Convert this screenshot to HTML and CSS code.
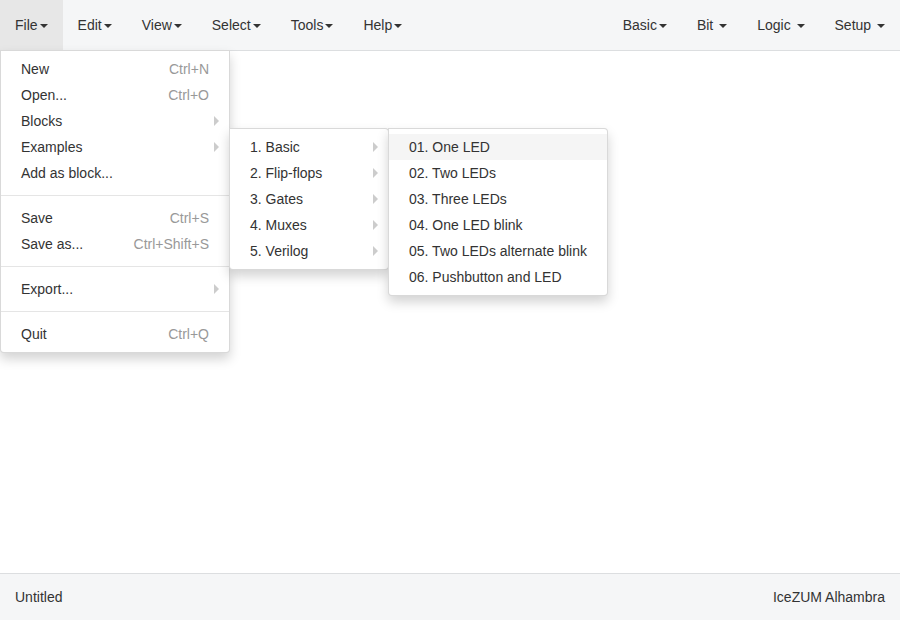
FILE: index.html
```html
<!DOCTYPE html>
<html>
<head>
<meta charset="utf-8">
<link rel="stylesheet" href="styles.css">
</head>
<body>
<div class="app">
  <header class="navbar">
    <ul class="nav">
      <li class="nav-item active">
        <a class="nav-link">File<span class="caret"></span></a>
        <ul class="menu file-menu">
          <li class="item"><span>New</span><span class="shortcut">Ctrl+N</span></li>
          <li class="item"><span>Open...</span><span class="shortcut">Ctrl+O</span></li>
          <li class="item sub"><span>Blocks</span></li>
          <li class="item sub">
            <span>Examples</span>
            <ul class="menu submenu">
              <li class="item sub">
                <span>1. Basic</span>
                <ul class="menu submenu">
                  <li class="item hover"><span>01. One LED</span></li>
                  <li class="item"><span>02. Two LEDs</span></li>
                  <li class="item"><span>03. Three LEDs</span></li>
                  <li class="item"><span>04. One LED blink</span></li>
                  <li class="item"><span>05. Two LEDs alternate blink</span></li>
                  <li class="item"><span>06. Pushbutton and LED</span></li>
                </ul>
              </li>
              <li class="item sub"><span>2. Flip-flops</span></li>
              <li class="item sub"><span>3. Gates</span></li>
              <li class="item sub"><span>4. Muxes</span></li>
              <li class="item sub"><span>5. Verilog</span></li>
            </ul>
          </li>
          <li class="item"><span>Add as block...</span></li>
          <li class="divider"></li>
          <li class="item"><span>Save</span><span class="shortcut">Ctrl+S</span></li>
          <li class="item"><span>Save as...</span><span class="shortcut">Ctrl+Shift+S</span></li>
          <li class="divider"></li>
          <li class="item sub"><span>Export...</span></li>
          <li class="divider"></li>
          <li class="item"><span>Quit</span><span class="shortcut">Ctrl+Q</span></li>
        </ul>
      </li>
      <li class="nav-item"><a class="nav-link">Edit<span class="caret"></span></a></li>
      <li class="nav-item"><a class="nav-link">View<span class="caret"></span></a></li>
      <li class="nav-item"><a class="nav-link">Select<span class="caret"></span></a></li>
      <li class="nav-item"><a class="nav-link">Tools<span class="caret"></span></a></li>
      <li class="nav-item"><a class="nav-link">Help<span class="caret"></span></a></li>
    </ul>
    <ul class="nav nav-right">
      <li class="nav-item"><a class="nav-link">Basic<span class="caret"></span></a></li>
      <li class="nav-item"><a class="nav-link">Bit <span class="caret"></span></a></li>
      <li class="nav-item"><a class="nav-link">Logic <span class="caret"></span></a></li>
      <li class="nav-item"><a class="nav-link">Setup <span class="caret"></span></a></li>
    </ul>
  </header>
  <main class="canvas"></main>
  <footer class="footer">
    <span>Untitled</span>
    <span>IceZUM Alhambra</span>
  </footer>
</div>
</body>
</html>
```

FILE: styles.css
```css
* {
  box-sizing: border-box;
}
html, body {
  margin: 0;
  padding: 0;
}
body {
  font-family: "Liberation Sans", Arial, Helvetica, sans-serif;
  font-size: 14px;
  line-height: 20px;
  color: #333;
  background: #fff;
}
ul {
  list-style: none;
  margin: 0;
  padding: 0;
}
.app {
  display: flex;
  flex-direction: column;
  height: 620px;
}
.navbar {
  display: flex;
  justify-content: space-between;
  height: 51px;
  background: #f5f6f7;
  border-bottom: 1px solid #dcdee0;
  position: relative;
  z-index: 10;
}
.nav {
  display: flex;
}
.nav-item {
  position: relative;
}
.nav-link {
  display: block;
  padding: 15px 15px;
  line-height: 20px;
  color: #333;
  white-space: pre;
}
.nav-item.active > .nav-link {
  background: #e7e7e7;
}
.caret {
  display: inline-block;
  width: 0;
  height: 0;
  margin-left: 2px;
  vertical-align: middle;
  border-top: 4px solid #333;
  border-right: 4px solid transparent;
  border-left: 4px solid transparent;
}
.menu {
  position: absolute;
  background: #fff;
  border: 1px solid rgba(0, 0, 0, 0.15);
  box-shadow: 0 6px 12px rgba(0, 0, 0, 0.175);
  padding: 5px 0;
  min-width: 160px;
  white-space: nowrap;
}
.file-menu {
  top: 100%;
  left: 0;
  width: 230px;
  border-radius: 0 0 4px 4px;
}
.submenu {
  top: -6px;
  left: 100%;
  border-radius: 0 4px 4px 4px;
}
.item {
  position: relative;
  display: flex;
  justify-content: space-between;
  padding: 3px 20px;
  line-height: 20px;
  color: #333;
}
.item.hover {
  background: #f5f5f5;
}
.shortcut {
  color: #999;
  margin-left: 20px;
}
.item.sub::after {
  content: "";
  position: absolute;
  right: 10px;
  top: 8px;
  width: 0;
  height: 0;
  border-left: 5px solid #ccc;
  border-top: 5px solid transparent;
  border-bottom: 5px solid transparent;
}
.divider {
  height: 1px;
  margin: 9px 0;
  background: #e5e5e5;
}
.canvas {
  flex: 1;
  background: #fff;
}
.footer {
  display: flex;
  justify-content: space-between;
  align-items: center;
  height: 47px;
  padding: 0 15px;
  background: #f5f6f7;
  border-top: 1px solid #dcdee0;
}
```
